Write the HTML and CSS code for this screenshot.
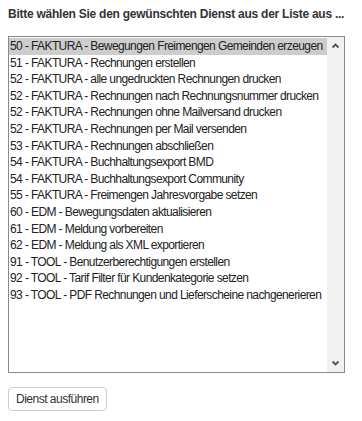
FILE: index.html
```html
<!DOCTYPE html>
<html lang="de">
<head>
    <meta charset="UTF-8">
    <title>Dienst auswählen</title>
    <link rel="stylesheet" href="styles.css">
</head>
<body>

    <h3 class="title">Bitte wählen Sie den gewünschten Dienst aus der Liste aus ...</h3>

    <div class="listbox">
        <ul class="options">
            <li class="selected">50 - FAKTURA - Bewegungen Freimengen Gemeinden erzeugen</li>
            <li>51 - FAKTURA - Rechnungen erstellen</li>
            <li>52 - FAKTURA - alle ungedruckten Rechnungen drucken</li>
            <li>52 - FAKTURA - Rechnungen nach Rechnungsnummer drucken</li>
            <li>52 - FAKTURA - Rechnungen ohne Mailversand drucken</li>
            <li>52 - FAKTURA - Rechnungen per Mail versenden</li>
            <li>53 - FAKTURA - Rechnungen abschließen</li>
            <li>54 - FAKTURA - Buchhaltungsexport BMD</li>
            <li>54 - FAKTURA - Buchhaltungsexport Community</li>
            <li>55 - FAKTURA - Freimengen Jahresvorgabe setzen</li>
            <li>60 - EDM - Bewegungsdaten aktualisieren</li>
            <li>61 - EDM - Meldung vorbereiten</li>
            <li>62 - EDM - Meldung als XML exportieren</li>
            <li>91 - TOOL - Benutzerberechtigungen erstellen</li>
            <li>92 - TOOL - Tarif Filter für Kundenkategorie setzen</li>
            <li>93 - TOOL - PDF Rechnungen und Lieferscheine nachgenerieren</li>
        </ul>
        <div class="scrollbar">
            <svg width="9" height="6" viewBox="0 0 9 6"><path d="M1.5 4.5 L4.5 1.5 L7.5 4.5" fill="none" stroke="#505050" stroke-width="1.8"/></svg>
            <svg width="9" height="6" viewBox="0 0 9 6"><path d="M1.5 1.5 L4.5 4.5 L7.5 1.5" fill="none" stroke="#505050" stroke-width="1.8"/></svg>
        </div>
    </div>

    <button class="run">Dienst ausführen</button>

</body>
</html>
```

FILE: styles.css
```css
body {
    margin: 8px;
    font-family: 'Liberation Sans', Arial, sans-serif;
    color: #333;
}

.title {
    font-size: 12px;
    line-height: 13px;
    letter-spacing: -0.25px;
    font-weight: bold;
    margin: 0 0 15px 0;
    white-space: nowrap;
}

.listbox {
    display: flex;
    width: 335px;
    height: 335px;
    border: 1px solid #8a8a8a;
}

.options {
    flex: 1;
    list-style: none;
    margin: 0;
    padding: 1px 0 0 0;
    color: #222;
}

.options li {
    font-size: 12px;
    letter-spacing: -0.6px;
    height: 16.6px;
    line-height: 16.6px;
    padding-left: 1px;
    white-space: nowrap;
}

.options li.selected {
    background: #cdcdcd;
}

.scrollbar {
    width: 17px;
    background: #f1f1f1;
    display: flex;
    flex-direction: column;
    justify-content: space-between;
    align-items: center;
    padding: 6px 0;
}

.run {
    margin-top: 14px;
    font-family: 'Liberation Sans', Arial, sans-serif;
    font-size: 12px;
    letter-spacing: -0.5px;
    color: #333;
    background: #fff;
    border: 1px solid #ccc;
    border-radius: 4px;
    padding: 4px 7px;
}
```
